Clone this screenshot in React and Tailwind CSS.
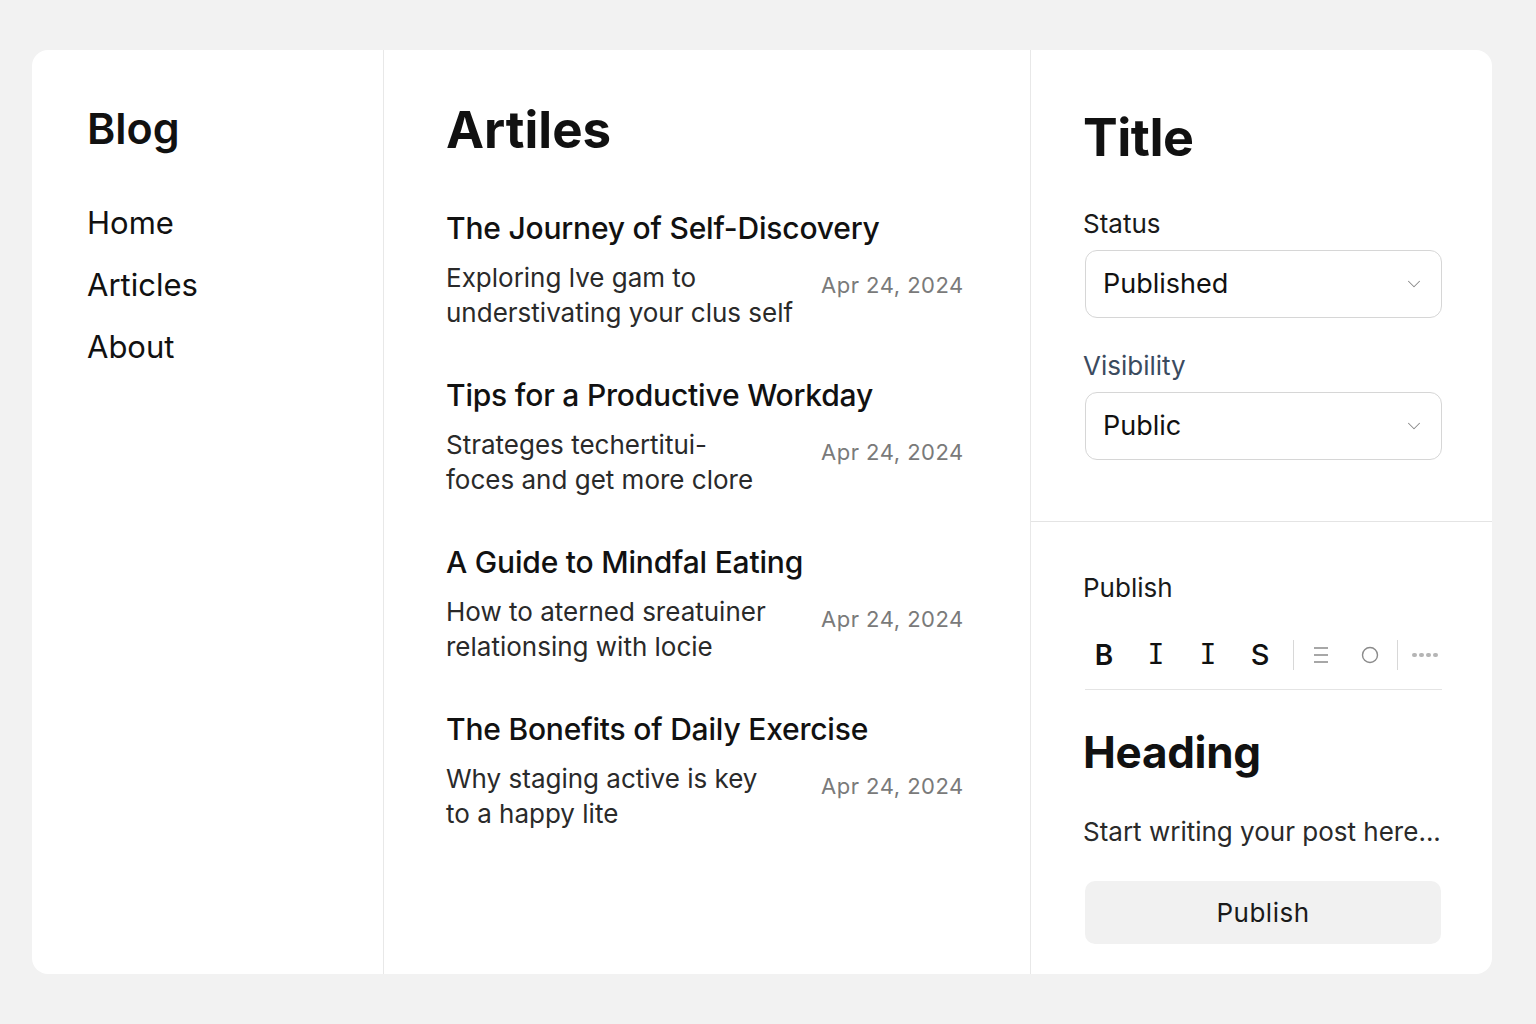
import { ChevronDown } from 'lucide-react';

const articles = [
  {
    title: 'The Journey of Self-Discovery',
    lines: ['Exploring lve gam to', 'understivating your clus self'],
    date: 'Apr 24, 2024',
  },
  {
    title: 'Tips for a Productive Workday',
    lines: ['Strateges techertitui-', 'foces and get more clore'],
    date: 'Apr 24, 2024',
  },
  {
    title: 'A Guide to Mindfal Eating',
    lines: ['How to aterned sreatuiner', 'relationsing with locie'],
    date: 'Apr 24, 2024',
  },
  {
    title: 'The Bonefits of Daily Exercise',
    lines: ['Why staging active is key', 'to a happy lite'],
    date: 'Apr 24, 2024',
  },
];

function Select({ value }) {
  return (
    <div className="mt-[10px] h-[68px] ml-[2px] rounded-[12px] border border-[#d6d6d6] bg-white flex items-center justify-between pl-[17px] pr-[16px]">
      <span className="text-[27px] text-[#111]">{value}</span>
      <ChevronDown size={22} strokeWidth={1.1} className="text-[#888]" />
    </div>
  );
}

function Toolbar() {
  return (
    <div className="mt-4 h-[70px] ml-[2px] flex items-center border-b border-[#e4e4e4]">
      <span className="w-[38px] text-center text-[28px] font-semibold text-[#111]">B</span>
      <span className="ml-[14px] w-[38px] text-center text-[28px] text-[#111] font-['DejaVu_Sans_Mono',monospace]">I</span>
      <span className="ml-[14px] w-[38px] text-center text-[28px] text-[#111] font-['DejaVu_Sans_Mono',monospace]">I</span>
      <span className="ml-[14px] w-[38px] text-center text-[29px] font-medium text-[#111]">S</span>
      <span className="ml-[14px] h-[30px] w-px bg-[#d8d8d8]" />
      <span className="ml-[7px] w-[40px] flex justify-center">
        <svg width="16" height="18" viewBox="0 0 16 18" fill="none" stroke="#8a8a8a" strokeWidth="1.3">
          <path d="M1 2h14M1 9h14M1 16h14" />
        </svg>
      </span>
      <span className="ml-[9px] w-[40px] flex justify-center">
        <svg width="18" height="18" viewBox="0 0 18 18" fill="none" stroke="#8a8a8a" strokeWidth="1.4">
          <circle cx="9" cy="9" r="7.5" />
        </svg>
      </span>
      <span className="ml-[7px] h-[30px] w-px bg-[#d8d8d8]" />
      <span className="ml-[14px] flex gap-[2px]">
        {[0, 1, 2, 3].map((i) => (
          <span key={i} className="h-[4px] w-[5px] rounded-full bg-[#b5b5b5]" />
        ))}
      </span>
    </div>
  );
}

export default function App() {
  return (
    <div className="min-h-screen bg-[#f2f2f2] pt-[50px] pl-8 font-['Inter',sans-serif]">
      <div className="w-[1460px] h-[924px] bg-white rounded-[16px] flex overflow-hidden">
        {/* Sidebar */}
        <aside className="w-[352px] border-r border-[#e8e8e8] pl-[55px] pt-[54px]">
          <h1 className="text-[43px] leading-[48px] font-semibold text-[#111]">Blog</h1>
          <nav className="mt-[51px] flex flex-col gap-[22px]">
            {['Home', 'Articles', 'About'].map((item) => (
              <a key={item} className="text-[31px] leading-[40px] text-[#111]">{item}</a>
            ))}
          </nav>
        </aside>

        {/* Articles list */}
        <main className="w-[647px] border-r border-[#e8e8e8] pl-[62px] pt-[50px]">
          <h2 className="text-[51px] leading-[60px] font-bold text-[#111]">Artiles</h2>
          <div className="mt-[50px] flex flex-col gap-[47px]">
            {articles.map((a) => (
              <div key={a.title}>
                <h3 className="text-[30px] leading-[36px] font-medium text-[#111] tracking-[-0.2px]">{a.title}</h3>
                <div className="mt-[14px] flex items-start">
                  <p className="w-[375px] text-[26px] leading-[35px] text-[#2a2a2a]">
                    {a.lines[0]}
                    <br />
                    {a.lines[1]}
                  </p>
                  <span className="mt-[10px] text-[22px] leading-[30px] text-[#7a7a7a] tracking-[0.5px]">{a.date}</span>
                </div>
              </div>
            ))}
          </div>
        </main>

        {/* Editor panel */}
        <section className="flex-1 flex flex-col">
          <div className="pl-[52px] pr-[50px] pt-[58px] pb-[61px] border-b border-[#e4e4e4]">
            <h2 className="text-[52px] leading-[60px] font-bold text-[#111] tracking-[-0.5px]">Title</h2>
            <div className="mt-[40px] text-[26px] leading-[32px] text-[#1a1a1a]">Status</div>
            <Select value="Published" />
            <div className="mt-[32px] text-[26px] leading-[32px] text-[#3b4b5f]">Visibility</div>
            <Select value="Public" />
          </div>
          <div className="pl-[52px] pr-[50px] pt-[50px]">
            <div className="text-[26px] leading-[32px] text-[#1a1a1a]">Publish</div>
            <Toolbar />
            <h2 className="mt-[36px] text-[44px] leading-[52px] font-bold text-[#111] tracking-[-0.3px]">Heading</h2>
            <p className="mt-[37px] text-[26px] leading-[34px] text-[#2a2a2a]">Start writing your post here...</p>
            <button className="mt-[32px] ml-[2px] w-[356px] h-[63px] rounded-[10px] bg-[#f1f1f1] text-[26px] tracking-[0.5px] text-[#1a1a1a]">
              Publish
            </button>
          </div>
        </section>
      </div>
    </div>
  );
}
